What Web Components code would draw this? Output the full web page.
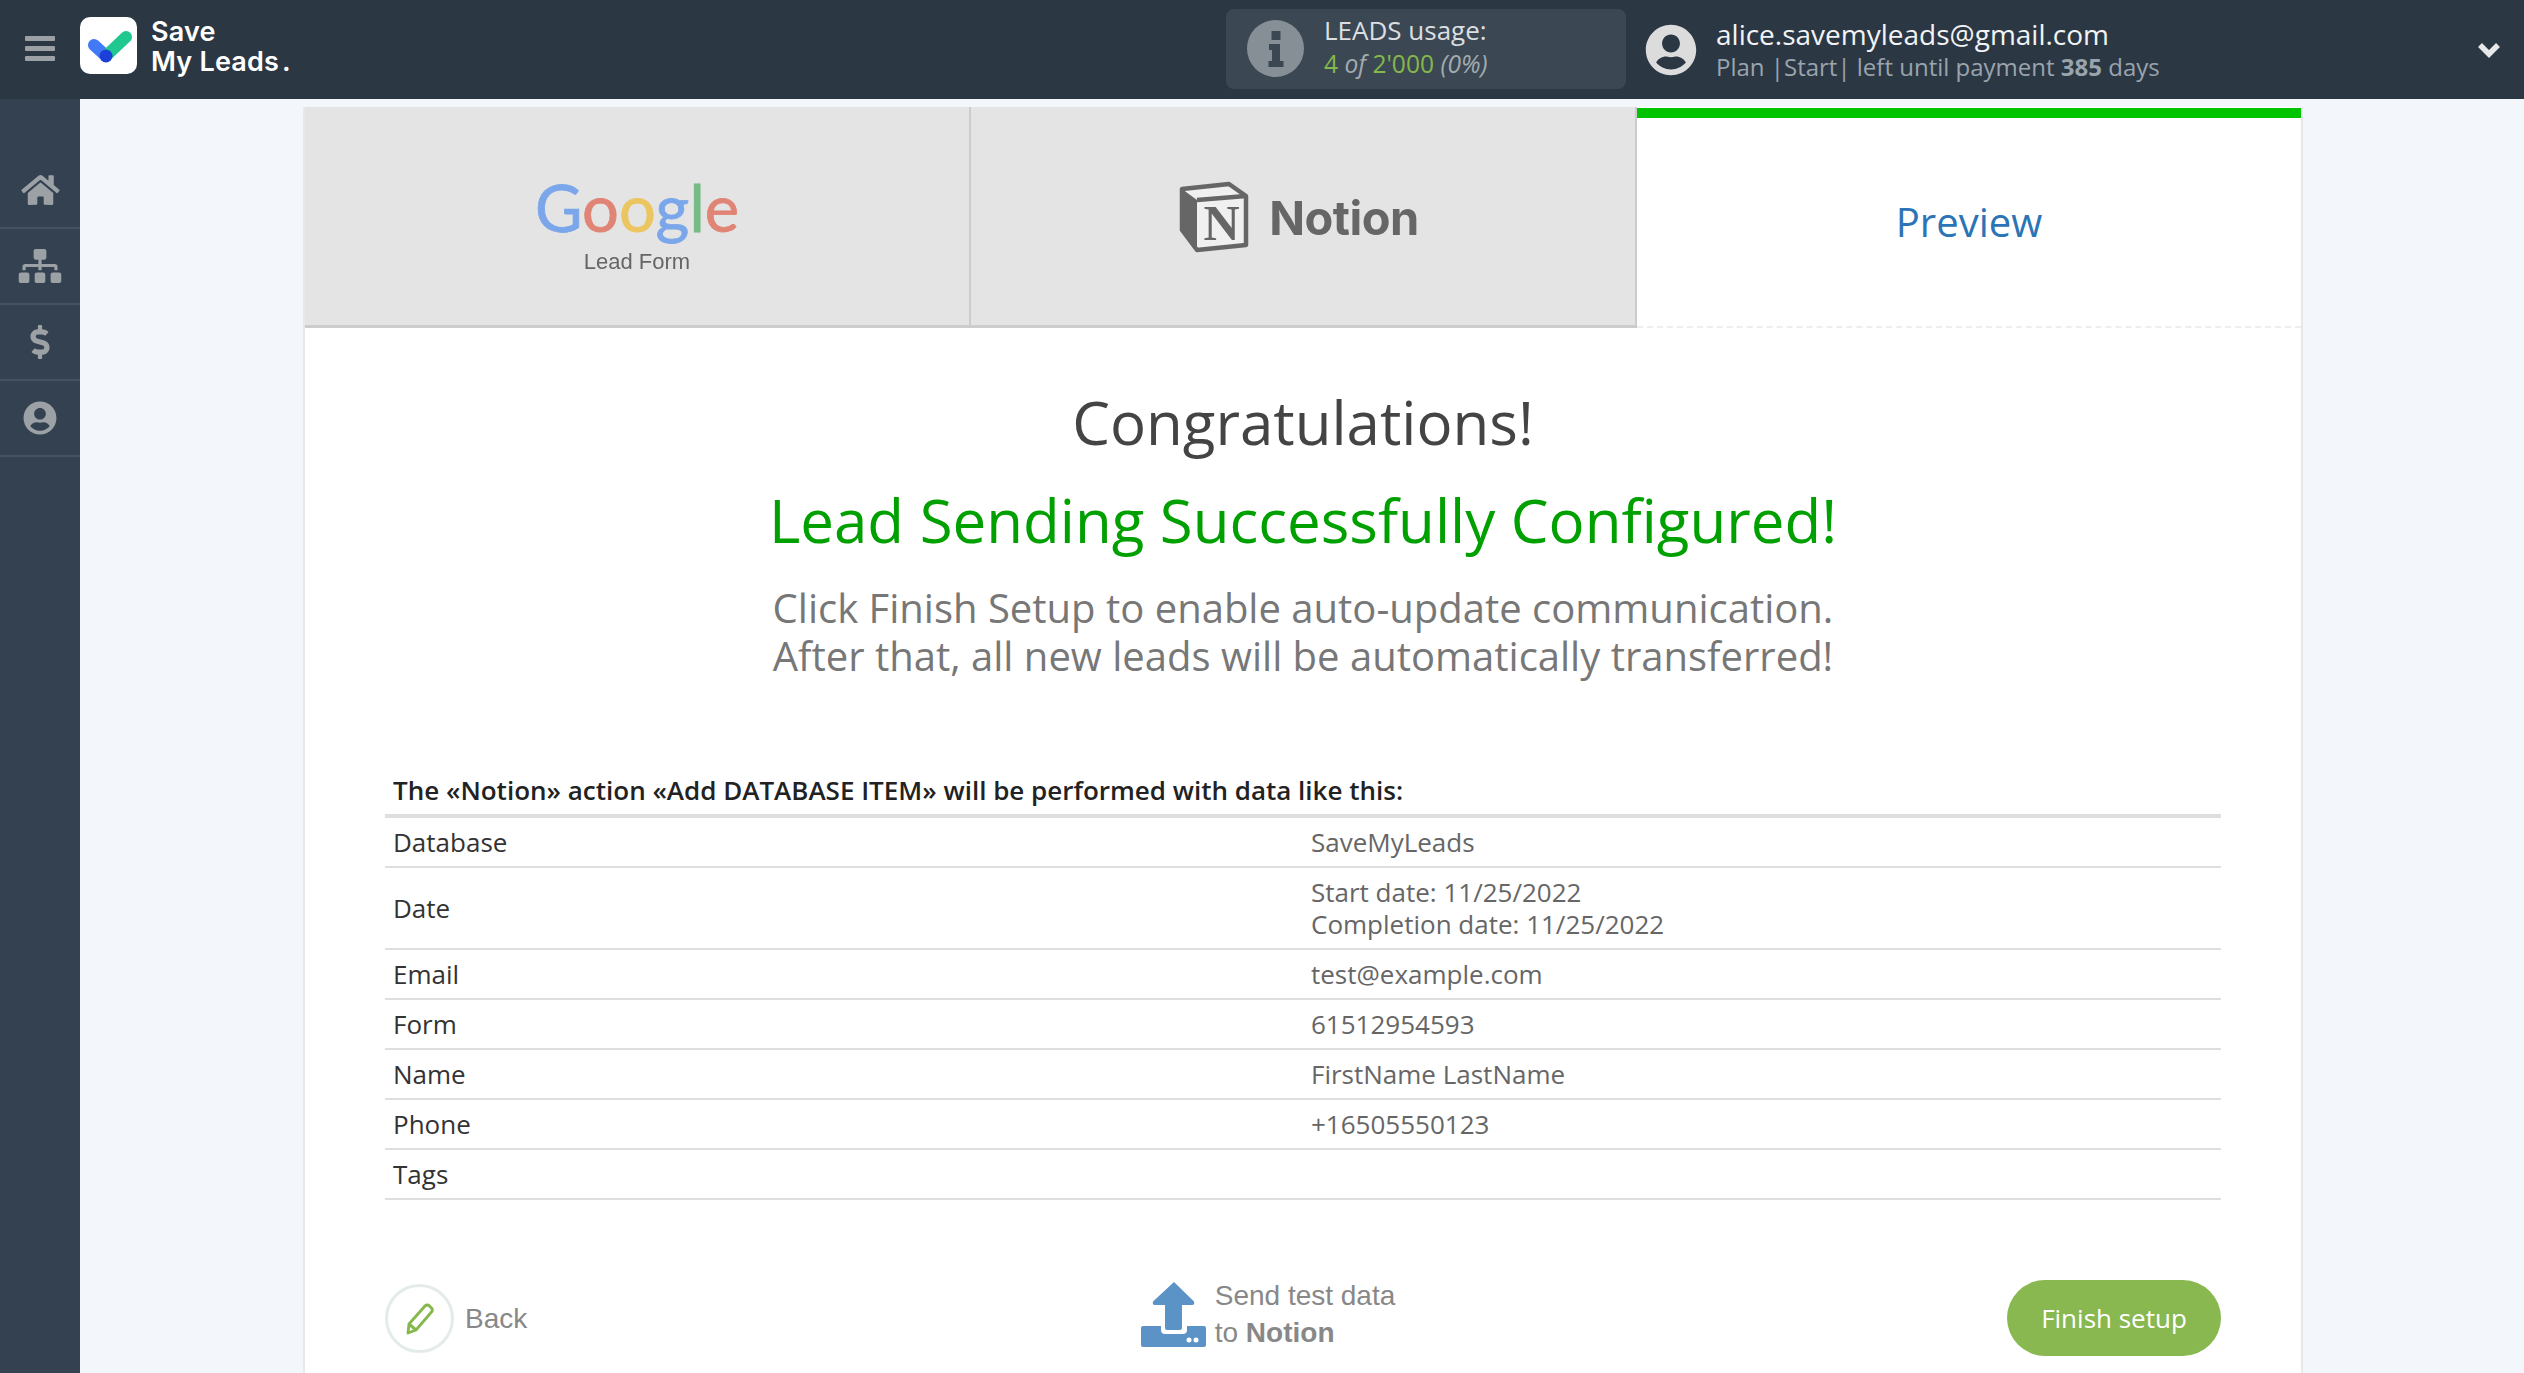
<!DOCTYPE html>
<html>
<head>
<meta charset="utf-8">
<title>Save My Leads</title>
<style>
  html, body { margin: 0; height: 100%; overflow: hidden; }
  body { background: #f3f7fc; font-family: "Open Sans", sans-serif; }
</style>
</head>
<body>
<sml-app>
  <sml-header slot="header"></sml-header>
  <sml-sidebar slot="sidebar"></sml-sidebar>
  <sml-card>
    <sml-tabs></sml-tabs>
    <sml-message></sml-message>
    <sml-table>
      <sml-row><span slot="label">Database</span>SaveMyLeads</sml-row>
      <sml-row><span slot="label">Date</span>Start date: 11/25/2022<br>Completion date: 11/25/2022</sml-row>
      <sml-row><span slot="label">Email</span>test@example.com</sml-row>
      <sml-row><span slot="label">Form</span>61512954593</sml-row>
      <sml-row><span slot="label">Name</span>FirstName LastName</sml-row>
      <sml-row><span slot="label">Phone</span>+16505550123</sml-row>
      <sml-row><span slot="label">Tags</span></sml-row>
    </sml-table>
    <sml-actions></sml-actions>
  </sml-card>
</sml-app>

<script>
const define = (name, content) => {
  customElements.define(name, class extends HTMLElement {
    constructor() {
      super();
      this.attachShadow({ mode: "open" });
      this.shadowRoot.innerHTML = content;
    }
  });
};

define("sml-app", `
  <style>
    :host {
      display: grid;
      grid-template-columns: 80px 1fr;
      grid-template-rows: 99px 1fr;
      height: 1373px;
      overflow: hidden;
    }
    .header { grid-column: 1 / 3; }
    .main { padding: 8px 221px 0 223px; min-width: 0; }
  </style>
  <div class="header"><slot name="header"></slot></div>
  <slot name="sidebar"></slot>
  <div class="main"><slot></slot></div>
`);

define("sml-header", `
  <style>
    :host {
      align-items: center;
      background: #2c3744;
      color: #fff;
      display: flex;
      height: 99px;
    }
    .burger { margin-left: 25px; margin-top: -2px; width: 30px; display: grid; gap: 5px; }
    .burger i { background: #9ca1a6; border-radius: 1px; display: block; height: 5px; }
    .logo {
      background: #fff;
      border-radius: 10px;
      display: block;
      height: 57px;
      margin-left: 25px;
      margin-top: -8px;
      width: 57px;
    }
    .brand {
      font-family: Inter, sans-serif;
      font-size: 27px;
      font-weight: 600;
      letter-spacing: .2px;
      line-height: 30px;
      margin-left: 14px;
      margin-top: -6px;
      width: 1075px;
    }
    .usage {
      align-items: center;
      background: #3b4853;
      border-radius: 8px;
      box-sizing: border-box;
      display: flex;
      height: 80px;
      margin-bottom: 2px;
      padding-left: 21px;
      width: 400px;
    }
    .usage svg { height: 57px; width: 57px; }
    .usage div { color: #dcdfe1; font-size: 26px; line-height: 33px; margin-left: 20px; margin-bottom: 3px; }
    .usage span { font-size: 24.6px; }
    .usage b { color: #85b84a; font-weight: 400; }
    .usage em { color: #a3abb1; }
    .user { align-items: center; display: flex; margin-left: 19px; }
    .user svg { height: 52px; width: 52px; }
    .who { margin-left: 19px; }
    .mail { color: #f1f3f4; font-size: 28px; line-height: 35px; }
    .plan { color: #99a4ad; font-size: 24px; line-height: 30px; }
    .plan b { font-weight: 700; }
    .chev { height: 18px; margin-left: auto; margin-right: 23px; width: 24px; }
  </style>
  <div class="burger"><i></i><i></i><i></i></div>
  <svg class="logo" viewBox="0 0 57 57">
    <path d="M14 28l12 11" fill="none" stroke="#4179f6" stroke-width="12" stroke-linecap="round"/>
    <path d="M26 39l20-19" fill="none" stroke="#20c78e" stroke-width="12" stroke-linecap="round"/>
    <circle cx="26" cy="39" r="6.5" fill="#1c3fd8"/>
  </svg>
  <div class="brand">Save<br>My Leads<span style="margin-left:3px">.</span></div>
  <div class="usage">
    <svg viewBox="0 0 57 57">
      <circle cx="28.5" cy="28.5" r="28.5" fill="#868f96"/>
      <path d="M22 24h11v17h3.5v6h-15v-6H25V30h-3zM24.5 11h9v9h-9z" fill="#3b4853"/>
    </svg>
    <div>LEADS usage:<br><span><b>4</b> <em>of</em> <b>2'000</b> <em>(0%)</em></span></div>
  </div>
  <div class="user">
    <svg viewBox="0 0 496 512"><path fill="#dcdcdc" d="M248 8C111 8 0 119 0 256s111 248 248 248 248-111 248-248S385 8 248 8zm0 96c48.6 0 88 39.4 88 88s-39.4 88-88 88-88-39.4-88-88 39.4-88 88-88zm0 344c-58.7 0-111.3-26.6-146.5-68.2 18.8-35.4 55.6-59.8 98.5-59.8 2.4 0 4.8.4 7.1 1.1 13 4.2 26.6 6.9 40.9 6.9 14.3 0 28-2.7 40.9-6.9 2.3-.7 4.7-1.1 7.1-1.1 42.9 0 79.7 24.4 98.5 59.8C359.3 421.4 306.7 448 248 448z"/></svg>
    <div class="who">
      <div class="mail">alice.savemyleads@gmail.com</div>
      <div class="plan">Plan |Start| left until payment <b>385</b> days</div>
    </div>
  </div>
  <svg class="chev" viewBox="0 0 24 18"><path d="M3 4l9 9 9-9" fill="none" stroke="#e6e8ea" stroke-width="5.5"/></svg>
`);

define("sml-sidebar", `
  <style>
    :host {
      background: #344150;
      box-sizing: border-box;
      display: block;
      padding-top: 54px;
    }
    a {
      align-items: center;
      border-bottom: 2px solid #465260;
      box-sizing: border-box;
      display: flex;
      height: 76px;
      justify-content: center;
    }
    svg { fill: #9ca1a6; display: block; }
  </style>
  <a><svg width="39" height="34" viewBox="0 0 576 512"><path d="M280.37 148.26L96 300.11V464a16 16 0 0 0 16 16l112.06-.29a16 16 0 0 0 15.92-16V368a16 16 0 0 1 16-16h64a16 16 0 0 1 16 16v95.64a16 16 0 0 0 16 16.05L464 480a16 16 0 0 0 16-16V300L295.67 148.26a12.19 12.19 0 0 0-15.3 0zM571.6 251.47L488 182.56V44.05a12 12 0 0 0-12-12h-56a12 12 0 0 0-12 12v72.61L318.47 43a48 48 0 0 0-61 0L4.34 251.47a12 12 0 0 0-1.6 16.9l25.5 31A12 12 0 0 0 45.15 301l235.22-193.74a12.19 12.19 0 0 1 15.3 0L530.9 301a12 12 0 0 0 16.9-1.6l25.5-31a12 12 0 0 0-1.7-16.93z"/></svg></a>
  <a><svg width="44" height="34" viewBox="0 0 640 512"><path d="M128 352H32c-17.67 0-32 14.33-32 32v96c0 17.67 14.33 32 32 32h96c17.67 0 32-14.33 32-32v-96c0-17.67-14.33-32-32-32zm-24-80h192v48h48v-48h192v48h48v-57.59c0-21.17-17.23-38.41-38.41-38.41H344v-64h40c17.67 0 32-14.33 32-32V32c0-17.67-14.33-32-32-32H256c-17.67 0-32 14.33-32 32v96c0 17.67 14.33 32 32 32h40v64H94.41C73.23 224 56 241.23 56 262.41V320h48v-48zm264 80h-96c-17.67 0-32 14.33-32 32v96c0 17.67 14.33 32 32 32h96c17.67 0 32-14.33 32-32v-96c0-17.67-14.33-32-32-32zm240 0h-96c-17.67 0-32 14.33-32 32v96c0 17.67 14.33 32 32 32h96c17.67 0 32-14.33 32-32v-96c0-17.67-14.33-32-32-32z"/></svg></a>
  <a><svg width="20" height="34" viewBox="0 0 288 512"><path d="M209.2 233.4l-108-31.6C88.7 198.2 80 186.5 80 173.5c0-16.3 13.2-29.5 29.5-29.5h66.3c12.2 0 24.2 3.7 34.2 10.5 6.1 4.1 14.3 3.1 19.5-2l34.8-34c7.1-6.9 6.1-18.4-1.8-24.5C238 74.8 207.4 64.1 176 64V16c0-8.8-7.2-16-16-16h-32c-8.8 0-16 7.2-16 16v48h-2.5C45.8 64-5.4 118.7.5 183.6c4.2 46.1 39.4 83.6 83.8 96.6l102.5 30c12.5 3.7 21.2 15.3 21.2 28.3 0 16.3-13.2 29.5-29.5 29.5h-66.3C100 368 88 364.3 78 357.5c-6.1-4.1-14.3-3.1-19.5 2l-34.8 34c-7.1 6.9-6.1 18.4 1.8 24.5 24.5 19.2 55.1 29.9 86.5 30v48c0 8.8 7.2 16 16 16h32c8.8 0 16-7.2 16-16v-48.2c46.6-.9 90.3-28.6 105.7-72.7 21.5-61.6-14.6-124.8-72.5-141.7z"/></svg></a>
  <a><svg width="34" height="34" viewBox="0 0 496 512"><path d="M248 8C111 8 0 119 0 256s111 248 248 248 248-111 248-248S385 8 248 8zm0 96c48.6 0 88 39.4 88 88s-39.4 88-88 88-88-39.4-88-88 39.4-88 88-88zm0 344c-58.7 0-111.3-26.6-146.5-68.2 18.8-35.4 55.6-59.8 98.5-59.8 2.4 0 4.8.4 7.1 1.1 13 4.2 26.6 6.9 40.9 6.9 14.3 0 28-2.7 40.9-6.9 2.3-.7 4.7-1.1 7.1-1.1 42.9 0 79.7 24.4 98.5 59.8C359.3 421.4 306.7 448 248 448z"/></svg></a>
`);

define("sml-card", `
  <style>
    :host {
      background: #fff;
      border-left: 2px solid #e6e9ec;
      border-right: 2px solid #e6e9ec;
      box-sizing: border-box;
      display: block;
      height: 1400px;
    }
  </style>
  <slot></slot>
`);

define("sml-tabs", `
  <style>
    :host { display: grid; grid-template-columns: 666px 666px 1fr; height: 221px; }
    .tab {
      align-items: center;
      background: #e4e4e4;
      border-bottom: 3px solid #cccccc;
      border-right: 2px solid #cccccc;
      box-sizing: border-box;
      display: flex;
      flex-direction: column;
      justify-content: center;
    }
    .google {
      filter: blur(.5px);
      font-family: Lato, sans-serif;
      font-size: 65px;
      line-height: 62px;
      margin-top: 18px;
      -webkit-text-stroke: .8px;
    }
    .sub {
      color: #666;
      filter: blur(.4px);
      font-family: "Liberation Sans", sans-serif;
      font-size: 22px;
      line-height: 26px;
      margin-top: 11px;
    }
    .notion { align-items: center; display: flex; filter: blur(.5px); gap: 20px; margin-right: 8px; margin-top: 2px; }
    .notion span { color: #666; font-family: Inter, sans-serif; font-size: 47px; font-weight: 700; letter-spacing: -.5px; }
    .preview {
      border-bottom: 2px dashed #eceef0;
      border-top: 10px solid #00c400;
      box-sizing: border-box;
      color: #2b74b6;
      font-size: 40px;
      line-height: 128px;
      margin-top: 1px;
      padding-top: 40px;
      text-align: center;
    }
  </style>
  <div class="tab">
    <div class="google"><span style="color:#7ba7ea">G</span><span style="color:#e08476">o</span><span style="color:#ebc55f">o</span><span style="color:#7ba7ea">g</span><span style="color:#74bb85">l</span><span style="color:#e08476">e</span></div>
    <div class="sub">Lead Form</div>
  </div>
  <div class="tab">
    <div class="notion">
      <svg width="70" height="72" viewBox="0 0 70 72">
        <path d="M3 8L50 3l17 12v49l-49 5L3 49z" fill="#f0f0f0" stroke="#666" stroke-width="4.5" stroke-linejoin="round"/>
        <path d="M3 8l15 11v50L3 49z" fill="#666"/>
        <path d="M18 19l49-4" stroke="#666" stroke-width="4.5" fill="none"/>
        <text x="42.500" y="59" text-anchor="middle" font-family="Liberation Serif" font-weight="700" font-size="50" fill="#666">N</text>
      </svg>
      <span>Notion</span>
    </div>
  </div>
  <div class="preview">Preview</div>
`);

define("sml-message", `
  <style>
    :host { display: block; text-align: center; }
    h1, h2, p { font-weight: 400; margin: 0; }
    h1 { color: #444; font-size: 60px; line-height: 80px; padding-top: 54px; }
    h2 { color: #00a000; font-size: 60px; line-height: 80px; margin-top: 18px; }
    p { color: #777; font-size: 40px; line-height: 48px; margin-top: 24px; }
  </style>
  <h1>Congratulations!</h1>
  <h2>Lead Sending Successfully Configured!</h2>
  <p>Click Finish Setup to enable auto-update communication.<br>After that, all new leads will be automatically transferred!</p>
`);

define("sml-table", `
  <style>
    :host { display: block; margin: 94px 80px 0 80px; }
    .title {
      border-bottom: 4px solid #dedede;
      color: #222;
      font-size: 26px;
      font-weight: 600;
      line-height: 32px;
      padding: 0 8px 8px;
    }
  </style>
  <div class="title">The «Notion» action «Add DATABASE ITEM» will be performed with data like this:</div>
  <slot></slot>
`);

define("sml-row", `
  <style>
    :host {
      align-items: center;
      border-bottom: 2px solid #dedede;
      box-sizing: border-box;
      color: #666;
      display: grid;
      font-size: 26px;
      grid-template-columns: 918px 1fr;
      line-height: 32px;
      min-height: 50px;
      padding: 8px 8px;
    }
    .label { color: #333; }
  </style>
  <div class="label"><slot name="label"></slot></div>
  <div><slot></slot></div>
`);

define("sml-actions", `
  <style>
    :host {
      align-items: center;
      color: #888;
      display: grid;
      font-family: "Liberation Sans", sans-serif;
      font-size: 28px;
      grid-template-columns: 1fr auto 1fr;
      margin: 80px 80px 0 80px;
    }
    .back { align-items: center; display: flex; gap: 11px; }
    .back span { padding-top: 2px; }
    .circle {
      align-items: center;
      border: 3px solid #e3ecea;
      border-radius: 50%;
      box-sizing: border-box;
      display: flex;
      height: 69px;
      justify-content: center;
      width: 69px;
    }
    .send {
      align-items: center;
      align-self: start;
      display: flex;
      gap: 9px;
      line-height: 37px;
      margin-right: 70px;
      margin-top: -3px;
    }
    .finish {
      background: #88b84f;
      border-radius: 38px;
      color: #fff;
      font-family: "Open Sans", sans-serif;
      font-size: 26px;
      justify-self: end;
      line-height: 76px;
      text-align: center;
      width: 214px;
    }
  </style>
  <div class="back">
    <div class="circle">
      <svg width="32" height="34" viewBox="0 0 32 34">
        <path d="M4 32l1-9L21 5a3 3 0 0 1 4.500 0l2 2a3 3 0 0 1 0 4L12 29z" fill="none" stroke="#85b84a" stroke-width="2.800" stroke-linejoin="round"/>
        <path d="M5 23l7 6" fill="none" stroke="#85b84a" stroke-width="3"/>
      </svg>
    </div>
    <span>Back</span>
  </div>
  <div class="send">
    <svg width="65" height="65" viewBox="0 0 65 65">
      <path d="M0 46a2 2 0 0 1 2-2h18v4a4 4 0 0 0 4 4h18a4 4 0 0 0 4-4v-4h17a2 2 0 0 1 2 2v17a2 2 0 0 1-2 2H2a2 2 0 0 1-2-2z" fill="#5b93c7"/>
      <path d="M33 0l20 19.500q1 3.500-2 3.500H41v23a2 2 0 0 1-2 2H26a2 2 0 0 1-2-2V23H14q-3 0-2-3.500z" fill="#5b93c7"/>
      <circle cx="48" cy="58" r="2.500" fill="#fff"/><circle cx="55" cy="58" r="2.500" fill="#fff"/>
    </svg>
    <div>Send test data<br>to <b>Notion</b></div>
  </div>
  <div class="finish">Finish setup</div>
`);
</script>
</body>
</html>
